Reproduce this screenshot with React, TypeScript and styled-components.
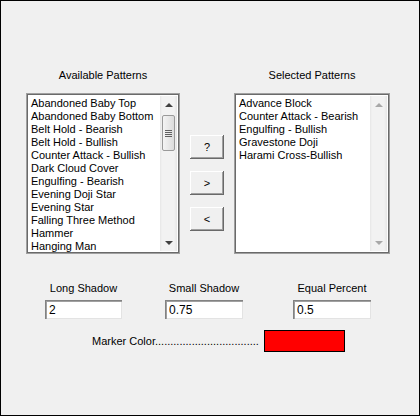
import styled, { createGlobalStyle } from 'styled-components';

const availablePatterns = [
	'Abandoned Baby Top',
	'Abandoned Baby Bottom',
	'Belt Hold - Bearish',
	'Belt Hold - Bullish',
	'Counter Attack - Bullish',
	'Dark Cloud Cover',
	'Engulfing - Bearish',
	'Evening Doji Star',
	'Evening Star',
	'Falling Three Method',
	'Hammer',
	'Hanging Man',
];

const selectedPatterns = [
	'Advance Block',
	'Counter Attack - Bearish',
	'Engulfing - Bullish',
	'Gravestone Doji',
	'Harami Cross-Bullish',
];

const GlobalStyle = createGlobalStyle`
  body{
    margin: 0;
    background: #f0f0f0;
    font-family: "Liberation Sans", Arial, sans-serif;
    color: #000;
  }
`;

function ScrollBar({ enabled }: { enabled: boolean }){
	return(
		<Track>
			<ArrowCell>
				<Arrow $dir='up' $enabled={enabled} />
			</ArrowCell>
			<ThumbArea>
				{enabled && (
					<Thumb>
						<Grip />
					</Thumb>
				)}
			</ThumbArea>
			<ArrowCell>
				<Arrow $dir='down' $enabled={enabled} />
			</ArrowCell>
		</Track>
	);
}

function PatternList({ title, items, width, scrollable }: {
	title: string;
	items: string[];
	width: number;
	scrollable: boolean;
}){
	return(
		<PatternColumn>
			<ColumnLabel>{title}</ColumnLabel>
			<ListBox $width={width}>
				<ListItems>
					{items.map(item => <Item key={item}>{item}</Item>)}
				</ListItems>
				<ScrollBar enabled={scrollable} />
			</ListBox>
		</PatternColumn>
	);
}

export default function App(){
	return(
		<>
			<GlobalStyle />
			<Window>
				<PatternsRow>
					<PatternList title='Available Patterns' items={availablePatterns} width={154} scrollable />
					<ButtonColumn>
						<MoveButton>?</MoveButton>
						<MoveButton>&gt;</MoveButton>
						<MoveButton>&lt;</MoveButton>
					</ButtonColumn>
					<PatternList title='Selected Patterns' items={selectedPatterns} width={156} scrollable={false} />
				</PatternsRow>

				<SettingsRow>
					<Field $offset={0} $width={77}>
						<FieldLabel>Long Shadow</FieldLabel>
						<TextBox defaultValue='2' />
					</Field>
					<Field $offset={43} $width={78}>
						<FieldLabel>Small Shadow</FieldLabel>
						<TextBox defaultValue='0.75' />
					</Field>
					<Field $offset={50} $width={78}>
						<FieldLabel>Equal Percent</FieldLabel>
						<TextBox defaultValue='0.5' />
					</Field>
				</SettingsRow>

				<MarkerRow>
					<MarkerLabel>Marker Color..................................</MarkerLabel>
					<ColorSwatch $color='#ff0000' />
				</MarkerRow>
			</Window>
		</>
	);
}

const Window = styled.div`
  width: 420px;
  height: 416px;
  box-sizing: border-box;
  border: 1px solid #000;
  background: #f0f0f0;
  padding-top: 68px;
  display: flex;
  flex-direction: column;
`;

const PatternsRow = styled.div`
  display: flex;
  align-items: flex-start;
  padding-left: 25px;
`;

const PatternColumn = styled.div`
  display: flex;
  flex-direction: column;
  align-items: center;
`;

const ColumnLabel = styled.div`
  font-size: 11px;
  line-height: 13px;
  margin-bottom: 11px;
`;

const ListBox = styled.div<{ $width: number }>`
  width: ${props => props.$width}px;
  height: 161px;
  box-sizing: border-box;
  display: flex;
  overflow: hidden;
  background: #fff;
  border: 1px solid #a0a0a0;
  box-shadow: inset 0 0 0 1px #6a6a6a;
  padding: 2px;
`;

const ListItems = styled.div`
  flex: 1;
  padding: 1px 2px;
`;

const Item = styled.div`
  font-size: 11px;
  line-height: 13px;
  white-space: nowrap;
`;

const Track = styled.div`
  width: 17px;
  flex-shrink: 0;
  display: flex;
  flex-direction: column;
  background: linear-gradient(90deg, #e6e6e6 0, #f2f2f2 2px, #f2f2f2 14px, #e6e6e6 17px);
`;

const ArrowCell = styled.div`
  height: 17px;
  display: flex;
  align-items: center;
  justify-content: center;
`;

const Arrow = styled.div<{ $dir: 'up' | 'down'; $enabled: boolean }>`
  width: 0;
  height: 0;
  border-left: 4px solid transparent;
  border-right: 4px solid transparent;
  ${props => props.$dir === 'up'
		? `border-bottom: 4px solid ${props.$enabled ? '#404040' : '#a8a8a8'};`
		: `border-top: 4px solid ${props.$enabled ? '#404040' : '#a8a8a8'};`}
`;

const ThumbArea = styled.div`
  flex: 1;
  display: flex;
  flex-direction: column;
  align-items: center;
  padding-top: 2px;
`;

const Thumb = styled.div`
  width: 13px;
  height: 36px;
  box-sizing: border-box;
  border: 1px solid #9a9a9a;
  border-radius: 2px;
  background: linear-gradient(90deg, #f4f4f4, #dcdcdc);
  display: flex;
  align-items: center;
  justify-content: center;
`;

const Grip = styled.div`
  width: 7px;
  height: 7px;
  background: repeating-linear-gradient(180deg, #606060 0, #606060 1px, transparent 1px, transparent 2px);
`;

const ButtonColumn = styled.div`
  display: flex;
  flex-direction: column;
  gap: 12px;
  padding-top: 66px;
  margin: 0 10px;
`;

const MoveButton = styled.button`
  width: 34px;
  height: 24px;
  padding: 0;
  background: #f0f0f0;
  border: none;
  box-shadow: inset -1px -1px 0 #696969, inset 1px 1px 0 #fff, inset -2px -2px 0 #a0a0a0;
  font-family: "Liberation Sans", Arial, sans-serif;
  font-size: 11px;
  color: #000;
`;

const SettingsRow = styled.div`
  display: flex;
  padding-left: 44px;
  margin-top: 28px;
`;

const Field = styled.div<{ $offset: number; $width: number }>`
  width: ${props => props.$width}px;
  margin-left: ${props => props.$offset}px;
  display: flex;
  flex-direction: column;
  align-items: center;
`;

const FieldLabel = styled.div`
  font-size: 11px;
  line-height: 13px;
  margin-bottom: 5px;
  white-space: nowrap;
`;

const TextBox = styled.input`
  width: 100%;
  height: 19px;
  box-sizing: border-box;
  border: none;
  padding: 0 0 0 4px;
  background: #fff;
  box-shadow: inset 1px 1px 0 #828282, inset 2px 2px 0 #a0a0a0, inset -1px -1px 0 #e3e3e3;
  font-family: "Liberation Sans", Arial, sans-serif;
  font-size: 12px;
  color: #000;
  outline: none;
`;

const MarkerRow = styled.div`
  display: flex;
  align-items: center;
  gap: 5px;
  padding-left: 91px;
  margin-top: 11px;
`;

const MarkerLabel = styled.div`
  font-size: 11px;
  line-height: 13px;
  white-space: nowrap;
`;

const ColorSwatch = styled.div<{ $color: string }>`
  width: 81px;
  height: 22px;
  box-sizing: border-box;
  border: 1px solid #000;
  background: ${props => props.$color};
`;
